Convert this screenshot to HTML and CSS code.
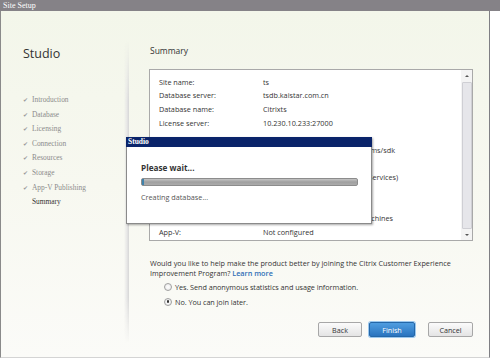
FILE: index.html
```html
<!DOCTYPE html>
<html lang="en">
<head>
  <meta charset="UTF-8">
  <title>Site Setup</title>
  <link rel="stylesheet" href="styles.css">
</head>
<body>

<div class="window">
  <div class="titlebar">Site Setup</div>

  <div class="frame">
    <aside class="sidebar">
      <h1 class="brand">Studio</h1>
      <ul class="steps">
        <li class="done">Introduction</li>
        <li class="done">Database</li>
        <li class="done">Licensing</li>
        <li class="done">Connection</li>
        <li class="done">Resources</li>
        <li class="done">Storage</li>
        <li class="done">App-V Publishing</li>
        <li class="current">Summary</li>
      </ul>
    </aside>
    <div class="divider"></div>

    <main class="content">
      <h2 class="page-title">Summary</h2>

      <div class="summary-box">
        <div class="summary-rows">
          <div class="row"><span class="key">Site name:</span><span class="val">ts</span></div>
          <div class="row"><span class="key">Database server:</span><span class="val">tsdb.kaistar.com.cn</span></div>
          <div class="row"><span class="key">Database name:</span><span class="val">Citrixts</span></div>
          <div class="row"><span class="key">License server:</span><span class="val">10.230.10.233:27000</span></div>
          <div class="row gap"></div>
          <div class="row"><span class="key">Connection address:</span><span class="val">https://vcenter01.kaistar.com/vims/sdk</span></div>
          <div class="row gap"></div>
          <div class="row"><span class="key">Virtual machines:</span><span class="val">Studio tools (Machine Creation Services)</span></div>
          <div class="row gap"></div>
          <div class="row gap"></div>
          <div class="row"><span class="key">Storage:</span><span class="val">Shared storage for all virtual machines</span></div>
          <div class="row"><span class="key">App-V:</span><span class="val">Not configured</span></div>
        </div>
        <div class="scrollbar">
          <span class="arrow up"></span>
          <span class="thumb"></span>
          <span class="arrow down"></span>
        </div>
      </div>

      <p class="ceip">Would you like to help make the product better by joining the Citrix Customer Experience<br>Improvement Program? <a href="#">Learn more</a></p>

      <div class="choices">
        <label class="radio"><span class="dot"></span>Yes. Send anonymous statistics and usage information.</label>
        <label class="radio checked"><span class="dot"></span>No. You can join later.</label>
      </div>

      <div class="actions">
        <button class="btn">Back</button>
        <button class="btn primary">Finish</button>
        <button class="btn cancel">Cancel</button>
      </div>
    </main>
  </div>

  <!-- progress popup -->
  <div class="dialog">
    <div class="dialog-title">Studio</div>
    <div class="dialog-body">
      <div class="wait">Please wait...</div>
      <div class="progress"><span class="progress-fill"></span></div>
      <div class="status">Creating database...</div>
    </div>
  </div>
</div>

</body>
</html>
```

FILE: styles.css
```css
body {
  margin: 0;
  background: #fff;
  font-family: "Open Sans", "Liberation Sans", sans-serif;
  font-size: 7.25px;
  color: #333;
}
.window {
  position: relative;
  width: 500px;
  height: 359px;
}
.titlebar {
  height: 11px;
  line-height: 11px;
  padding-left: 3px;
  background: #858287;
  color: #fff;
  font-family: "Liberation Serif", serif;
  font-size: 8px;
}
.frame {
  display: flex;
  width: 488px;
  height: 346px;
  border-left: 1px solid #8a8a8a;
  border-right: 1px solid #7f7f84;
  border-bottom: 1px solid #d4d4d4;
  background: linear-gradient(#f3f6ea, #f7f8f0 50%, #fbfbf8);
}

/* left column */
.sidebar {
  width: 123px;
  padding: 35px 0 0 22px;
  box-sizing: border-box;
}
.brand {
  margin: 0;
  font-size: 12.5px;
  line-height: 16px;
  font-weight: normal;
  color: #333;
}
.steps {
  list-style: none;
  margin: 31px 0 0;
  padding: 0;
  font-family: "Liberation Serif", serif;
  font-size: 7.4px;
  line-height: 14.6px;
  color: #8c8c8c;
}
.steps li {
  padding-left: 9px;
  position: relative;
}
.steps li.done::before {
  content: "✔";
  position: absolute;
  left: 0;
  font-family: "DejaVu Sans", sans-serif;
  font-size: 6px;
  color: #9a9a9a;
}
.steps li.current {
  color: #333;
}
.divider {
  width: 5px;
  margin: 30px 0 14px;
  background: linear-gradient(to right, rgba(0,0,0,0), #e6e6e6 60%, #d6d6d6);
  -webkit-mask-image: linear-gradient(rgba(0,0,0,0), #000 20%, #000 85%, rgba(0,0,0,0));
  mask-image: linear-gradient(rgba(0,0,0,0), #000 20%, #000 85%, rgba(0,0,0,0));
}

/* right column */
.content {
  flex: 1;
  padding: 34px 16px 0 20px;
}
.page-title {
  margin: 0 0 12px 1px;
  font-size: 8.5px;
  line-height: 12px;
  font-weight: normal;
  color: #333;
}
.summary-box {
  display: flex;
  height: 172px;
  box-sizing: border-box;
  border: 1px solid #a9a9a9;
  background: #fff;
}
.summary-rows {
  flex: 1;
  padding: 5.5px 0 0 9px;
}
.row {
  display: flex;
  height: 13.7px;
  line-height: 13.7px;
  white-space: nowrap;
}
.key {
  width: 104px;
  flex: none;
}
.scrollbar {
  width: 11px;
  display: flex;
  flex-direction: column;
  align-items: center;
  background: #f4f4f4;
}
.arrow {
  width: 0;
  height: 0;
  border-left: 2px solid transparent;
  border-right: 2px solid transparent;
}
.arrow.up {
  margin: 5px 0 5px;
  border-bottom: 2px solid #555;
}
.arrow.down {
  margin: 5px 0 4px;
  border-top: 2px solid #555;
}
.thumb {
  flex: 1;
  width: 8px;
  border: 1px solid #cfcfd4;
  border-radius: 1px;
  background: #e6e6ea;
}
.ceip {
  margin: 18px 0 0 1px;
  line-height: 9.5px;
  white-space: nowrap;
}
.ceip a {
  color: #2f6fb6;
  font-weight: 600;
  text-decoration: none;
}
.choices {
  margin-top: 1px;
  padding-left: 15px;
}
.radio {
  display: flex;
  align-items: center;
  height: 15px;
  letter-spacing: -0.05px;
}
.dot {
  width: 6px;
  height: 6px;
  margin-right: 3px;
  border: 1px solid #a0a0a0;
  border-radius: 50%;
  background: radial-gradient(#fff, #e6e6e6);
  display: flex;
  align-items: center;
  justify-content: center;
}
.radio.checked .dot::after {
  content: "";
  width: 2.5px;
  height: 2.5px;
  border-radius: 50%;
  background: #333;
}
.actions {
  display: flex;
  justify-content: flex-end;
  margin-top: 13px;
}
.btn {
  height: 15px;
  width: 44px;
  padding: 0;
  border: 1px solid #a7a7a7;
  border-radius: 2px;
  background: linear-gradient(#fbfbfb, #e4e4e4);
  font-family: inherit;
  font-size: 7.2px;
  color: #333;
}
.btn.primary {
  width: 46px;
  margin-left: 7px;
  border-color: #2467a8;
  background: linear-gradient(#4f9de0, #2a74bf);
  box-shadow: 0 0 0 1px #9cc8ee;
  color: #fff;
}
.btn.cancel {
  width: 45px;
  margin-left: 13px;
}

/* popup over the summary */
.dialog {
  position: absolute;
  left: 126px;
  top: 137px;
  width: 246px;
  height: 87px;
  box-sizing: border-box;
  border: 1px solid #8a8a8a;
  border-top: none;
  background: #fff;
  box-shadow: 1px 1px 2px rgba(0,0,0,0.35);
}
.dialog-title {
  height: 10px;
  line-height: 10px;
  margin: 0 -1px;
  padding-left: 2px;
  background: #0a246a;
  color: #fff;
  font-family: "Liberation Serif", serif;
  font-size: 7.5px;
  font-weight: bold;
}
.dialog-body {
  padding-left: 14px;
}
.wait {
  margin-top: 15px;
  line-height: 11px;
  font-size: 8.2px;
  font-weight: bold;
}
.progress {
  display: flex;
  width: 217px;
  height: 8px;
  margin-top: 5px;
  box-sizing: border-box;
  border: 1px solid #8c8c8c;
  border-radius: 2px;
  background: linear-gradient(#c4c4c4, #a0a0a0 50%, #ababab);
}
.progress-fill {
  width: 2px;
  background: #3f82ab;
}
.status {
  margin-top: 6px;
  line-height: 10px;
  color: #555;
}
```
